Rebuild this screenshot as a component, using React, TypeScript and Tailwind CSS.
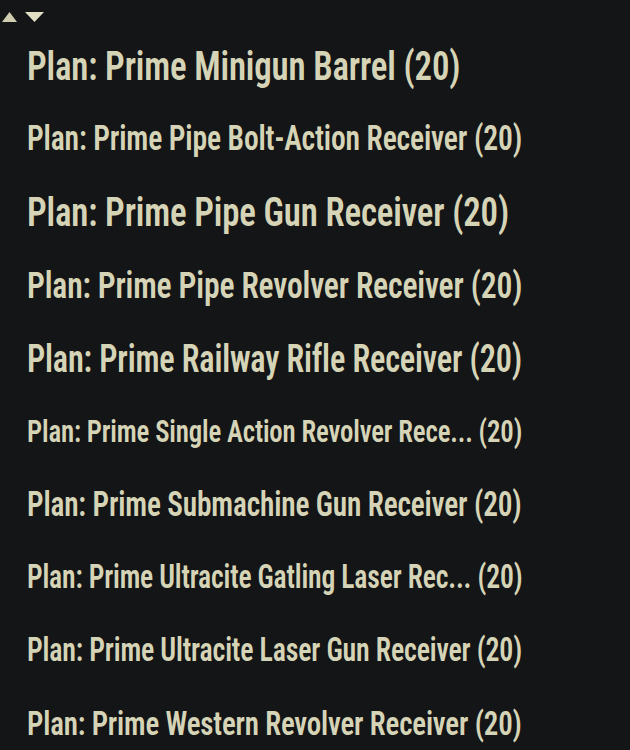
import { useLayoutEffect, useRef, useState } from 'react';

// item names shrink to fit the column, like the in-game list does
const MAX_SIZE = 41;
const SQUEEZE = 0.85;
const COLUMN = 495;

const plans = [
  'Plan: Prime Minigun Barrel (20)',
  'Plan: Prime Pipe Bolt-Action Receiver (20)',
  'Plan: Prime Pipe Gun Receiver (20)',
  'Plan: Prime Pipe Revolver Receiver (20)',
  'Plan: Prime Railway Rifle Receiver (20)',
  'Plan: Prime Single Action Revolver Rece... (20)',
  'Plan: Prime Submachine Gun Receiver (20)',
  'Plan: Prime Ultracite Gatling Laser Rec... (20)',
  'Plan: Prime Ultracite Laser Gun Receiver (20)',
  'Plan: Prime Western Revolver Receiver (20)',
];

function PlanRow({ label }: { label: string }) {
  const ref = useRef<HTMLSpanElement>(null);
  const [size, setSize] = useState(MAX_SIZE);

  useLayoutEffect(() => {
    const fit = () => {
      const el = ref.current;
      if (!el) return;
      const current = parseFloat(getComputedStyle(el).fontSize) || MAX_SIZE;
      const natural = (el.offsetWidth / current) * MAX_SIZE * SQUEEZE;
      setSize(Math.min(MAX_SIZE, (MAX_SIZE * COLUMN) / natural));
    };
    fit();
    document.fonts?.ready.then(fit);
  }, []);

  return (
    <div className="h-[73px] flex items-center pl-[27px]">
      <span
        ref={ref}
        style={{ fontSize: `${size}px` }}
        className="whitespace-nowrap leading-none font-semibold font-stretch-condensed origin-left scale-x-[0.85] tracking-[-0.2px]"
      >
        {label}
      </span>
    </div>
  );
}

export default function App() {
  return (
    <div className="min-h-screen w-full bg-[#141517] text-[#d6d4b6] font-['Roboto_Condensed',Roboto,sans-serif] overflow-hidden">
      <div className="flex items-center gap-[8px] pl-[2px] pt-[12px]">
        <svg width="15" height="10" viewBox="0 0 15 10" className="fill-[#cfcdb0]">
          <polygon points="7.5,0 15,10 0,10" />
        </svg>
        <svg width="19" height="10" viewBox="0 0 19 10" className="fill-[#e2e0c4]">
          <polygon points="0,0 19,0 9.5,10" />
        </svg>
      </div>
      <div className="flex flex-col pt-[8px]">
        {plans.map((p) => (
          <PlanRow key={p} label={p} />
        ))}
      </div>
    </div>
  );
}
